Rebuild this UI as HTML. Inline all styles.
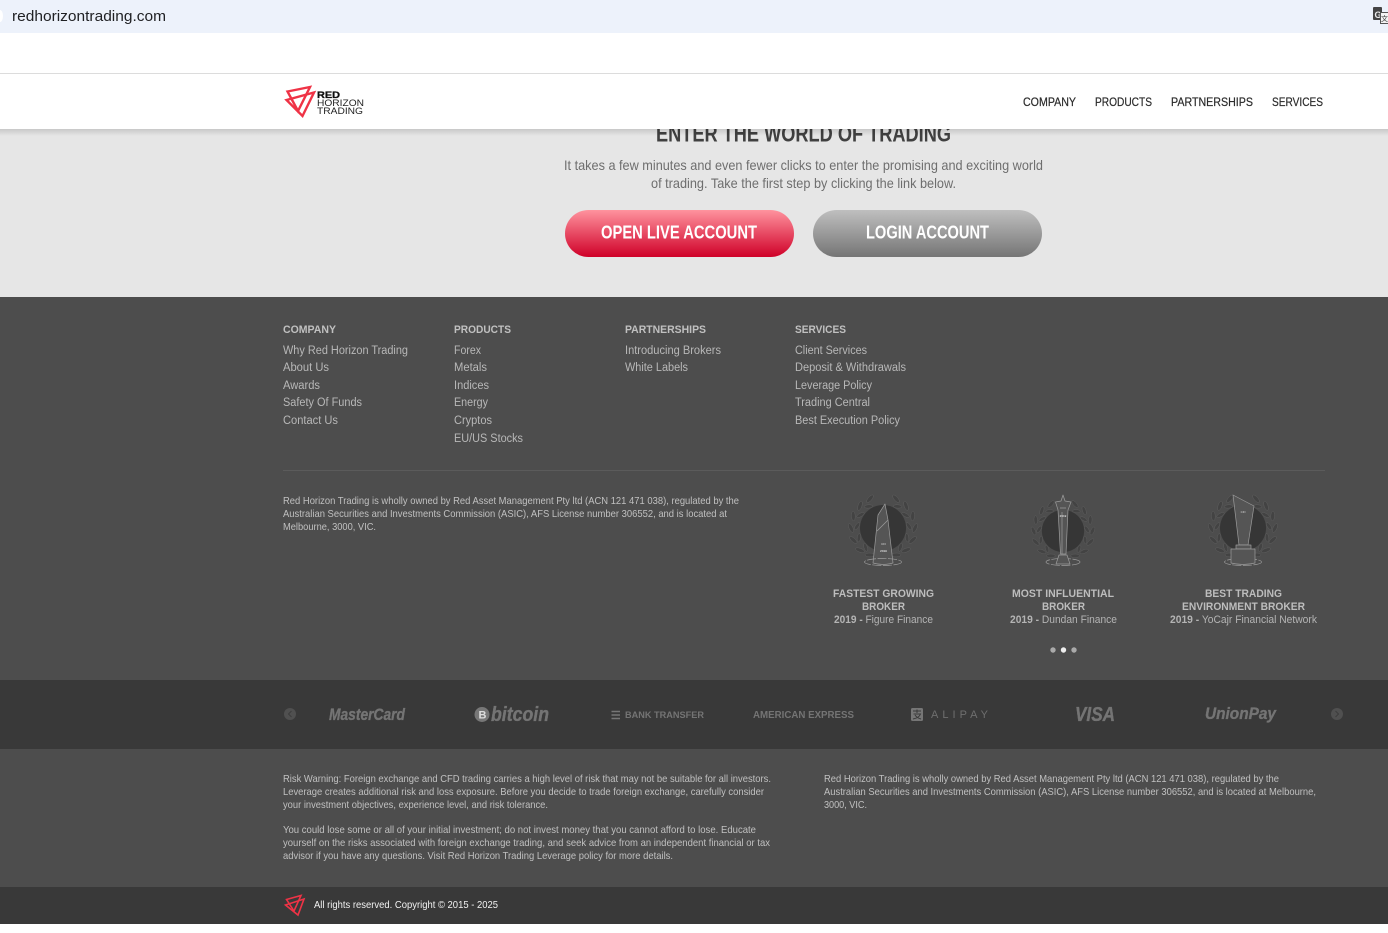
<!DOCTYPE html>
<html lang="en"><head><meta charset="utf-8"><title>Red Horizon Trading</title>
<style>
html,body{margin:0;padding:0;background:#fff;width:1388px;height:933px;overflow:hidden}
svg{position:absolute;left:0;top:0;display:block}
text{font-family:"Liberation Sans",sans-serif;white-space:pre}
.h{font-size:11px;font-weight:700;fill:#c0c0c0}
.l{font-size:11.5px;fill:#b8b8b8}
.p{font-size:10.5px;fill:#c0c0c0}
.n{font-size:11.5px;fill:#2b2b2b;stroke:#2b2b2b;stroke-width:.2}
.a{font-size:11px;font-weight:700;fill:#bdbdbd}
.b{font-size:11px;fill:#b4b4b4}
.g{fill:#747474;font-weight:700;stroke:#747474;stroke-width:.35}
.g2{fill:#747474;font-weight:700}
</style></head><body>
<svg width="1388" height="933" viewBox="0 0 1388 933" xmlns="http://www.w3.org/2000/svg">
<defs>
<linearGradient id="r" x1="0" y1="0" x2="0" y2="1"><stop offset="0" stop-color="#ff939e"/><stop offset="1" stop-color="#cf0028"/></linearGradient>
<linearGradient id="s" x1="0" y1="0" x2="0" y2="1"><stop offset="0" stop-color="#bfbfbf"/><stop offset="1" stop-color="#757575"/></linearGradient>
<linearGradient id="sh" x1="0" y1="0" x2="0" y2="1"><stop offset="0" stop-color="#000" stop-opacity=".13"/><stop offset="1" stop-color="#000" stop-opacity="0"/></linearGradient>
<g id="side" fill="#434343" stroke="#626262" stroke-width=".4">
<ellipse rx="1.9" ry="4.8" transform="rotate(-24) translate(0,-32) rotate(65)"/>
<ellipse rx="1.9" ry="4.8" transform="rotate(-46) translate(0,-32) rotate(65)"/>
<ellipse rx="1.9" ry="4.8" transform="rotate(-68) translate(0,-32) rotate(65)"/>
<ellipse rx="1.9" ry="4.8" transform="rotate(-90) translate(0,-32) rotate(65)"/>
<ellipse rx="1.9" ry="4.8" transform="rotate(-112) translate(0,-32) rotate(65)"/>
<ellipse rx="1.9" ry="4.8" transform="rotate(-134) translate(0,-32) rotate(65)"/>
<ellipse rx="1.9" ry="4.8" transform="rotate(-154) translate(0,-30) rotate(65)"/>
<ellipse rx="1.7" ry="4.2" transform="rotate(-34) translate(0,-26) rotate(-60)"/>
<ellipse rx="1.7" ry="4.2" transform="rotate(-60) translate(0,-26) rotate(-60)"/>
<ellipse rx="1.7" ry="4.2" transform="rotate(-86) translate(0,-26) rotate(-60)"/>
<ellipse rx="1.7" ry="4.2" transform="rotate(-112) translate(0,-26) rotate(-60)"/>
<ellipse rx="1.7" ry="4.2" transform="rotate(-138) translate(0,-26) rotate(-60)"/>
</g>
<g id="wreath"><use href="#side"/><use href="#side" transform="scale(-1,1)"/><circle r="23" fill="#363636"/></g>
</defs>

<!-- backgrounds -->
<rect width="1388" height="933" fill="#fff"/>
<rect width="1388" height="33" fill="#edf2fb"/>
<ellipse cx="0" cy="16" rx="3" ry="6" fill="#fff"/>
<rect y="129" width="1388" height="168" fill="#e6e6e6"/>
<rect y="297" width="1388" height="383" fill="#4d4d4d"/>
<rect y="680" width="1388" height="69" fill="#393939"/>
<rect y="749" width="1388" height="138" fill="#4d4d4d"/>
<rect y="887" width="1388" height="37" fill="#393939"/>

<!-- browser bar -->
<text x="12" y="21" font-size="15" fill="#202124" textLength="154" lengthAdjust="spacingAndGlyphs">redhorizontrading.com</text>
<rect x="1373" y="7" width="9" height="13" rx="1" fill="#444"/>
<text x="1374.5" y="18" font-size="9" font-weight="700" fill="#eee">G</text>
<rect x="1380.5" y="12.5" width="8" height="11" fill="#f4f4f4" stroke="#555"/>
<text x="1381" y="21" font-size="7" fill="#333" font-family="Noto Sans CJK SC">文</text>

<!-- hero -->
<text x="656" y="141.5" font-size="23" font-weight="700" fill="#404040" textLength="295" lengthAdjust="spacingAndGlyphs">ENTER THE WORLD OF TRADING</text>
<text x="564" y="170" font-size="14" fill="#6e6e6e" textLength="479" lengthAdjust="spacingAndGlyphs">It takes a few minutes and even fewer clicks to enter the promising and exciting world</text>
<text x="651" y="188" font-size="14" fill="#6e6e6e" textLength="305" lengthAdjust="spacingAndGlyphs">of trading. Take the first step by clicking the link below.</text>
<rect x="565" y="210" width="229" height="47" rx="23.5" fill="url(#r)"/>
<rect x="813" y="210" width="229" height="47" rx="23.5" fill="url(#s)"/>
<text x="601" y="238.5" font-size="18" font-weight="700" fill="#fff" textLength="156" lengthAdjust="spacingAndGlyphs">OPEN LIVE ACCOUNT</text>
<text x="866" y="238.5" font-size="18" font-weight="700" fill="#fff" textLength="123" lengthAdjust="spacingAndGlyphs">LOGIN ACCOUNT</text>

<!-- header -->
<rect y="129" width="1388" height="7" fill="url(#sh)"/>
<rect y="73" width="1388" height="56" fill="#fff"/>
<rect y="73" width="1388" height="1" fill="#dcdcdc"/>
<g fill="none" stroke="#ef3346" stroke-width="2.4" stroke-linejoin="miter">
<path d="M287.5 91.5L310 87L298 111Z"/>
<path d="M286.5 100L314 92.5L302.5 116Z"/>
</g>
<text x="317" y="98" font-size="9" font-weight="700" fill="#111" stroke="#111" stroke-width=".3" textLength="23" lengthAdjust="spacingAndGlyphs">RED</text>
<text x="317" y="106" font-size="9.5" fill="#222" textLength="47" lengthAdjust="spacingAndGlyphs">HORIZON</text>
<text x="317" y="114" font-size="9.5" fill="#222" textLength="46" lengthAdjust="spacingAndGlyphs">TRADING</text>
<text class="n" x="1023" y="106" textLength="53" lengthAdjust="spacingAndGlyphs">COMPANY</text>
<text class="n" x="1095" y="106" textLength="57" lengthAdjust="spacingAndGlyphs">PRODUCTS</text>
<text class="n" x="1171" y="106" textLength="82" lengthAdjust="spacingAndGlyphs">PARTNERSHIPS</text>
<text class="n" x="1272" y="106" textLength="51" lengthAdjust="spacingAndGlyphs">SERVICES</text>

<!-- footer columns -->
<text class="h" x="283" y="333" textLength="53" lengthAdjust="spacingAndGlyphs">COMPANY</text>
<text class="h" x="454" y="333" textLength="57" lengthAdjust="spacingAndGlyphs">PRODUCTS</text>
<text class="h" x="625" y="333" textLength="81" lengthAdjust="spacingAndGlyphs">PARTNERSHIPS</text>
<text class="h" x="795" y="333" textLength="51" lengthAdjust="spacingAndGlyphs">SERVICES</text>

<text class="l" x="283" y="354" textLength="125" lengthAdjust="spacingAndGlyphs">Why Red Horizon Trading</text>
<text class="l" x="283" y="371" textLength="46" lengthAdjust="spacingAndGlyphs">About Us</text>
<text class="l" x="283" y="389" textLength="37" lengthAdjust="spacingAndGlyphs">Awards</text>
<text class="l" x="283" y="406" textLength="79" lengthAdjust="spacingAndGlyphs">Safety Of Funds</text>
<text class="l" x="283" y="424" textLength="55" lengthAdjust="spacingAndGlyphs">Contact Us</text>

<text class="l" x="454" y="354" textLength="27" lengthAdjust="spacingAndGlyphs">Forex</text>
<text class="l" x="454" y="371" textLength="33" lengthAdjust="spacingAndGlyphs">Metals</text>
<text class="l" x="454" y="389" textLength="35" lengthAdjust="spacingAndGlyphs">Indices</text>
<text class="l" x="454" y="406" textLength="34" lengthAdjust="spacingAndGlyphs">Energy</text>
<text class="l" x="454" y="424" textLength="38" lengthAdjust="spacingAndGlyphs">Cryptos</text>
<text class="l" x="454" y="442" textLength="69" lengthAdjust="spacingAndGlyphs">EU/US Stocks</text>

<text class="l" x="625" y="354" textLength="96" lengthAdjust="spacingAndGlyphs">Introducing Brokers</text>
<text class="l" x="625" y="371" textLength="63" lengthAdjust="spacingAndGlyphs">White Labels</text>

<text class="l" x="795" y="354" textLength="72" lengthAdjust="spacingAndGlyphs">Client Services</text>
<text class="l" x="795" y="371" textLength="111" lengthAdjust="spacingAndGlyphs">Deposit &amp; Withdrawals</text>
<text class="l" x="795" y="389" textLength="77" lengthAdjust="spacingAndGlyphs">Leverage Policy</text>
<text class="l" x="795" y="406" textLength="75" lengthAdjust="spacingAndGlyphs">Trading Central</text>
<text class="l" x="795" y="424" textLength="105" lengthAdjust="spacingAndGlyphs">Best Execution Policy</text>

<rect x="283" y="470" width="1042" height="1" fill="#5b5b5b"/>

<text class="p" x="283" y="504" textLength="456" lengthAdjust="spacingAndGlyphs">Red Horizon Trading is wholly owned by Red Asset Management Pty ltd (ACN 121 471 038), regulated by the</text>
<text class="p" x="283" y="517" textLength="444" lengthAdjust="spacingAndGlyphs">Australian Securities and Investments Commission (ASIC), AFS License number 306552, and is located at</text>
<text class="p" x="283" y="530" textLength="93" lengthAdjust="spacingAndGlyphs">Melbourne, 3000, VIC.</text>

<!-- awards -->
<use href="#wreath" x="883" y="528"/>
<use href="#wreath" transform="translate(1063 531) scale(.92)"/>
<use href="#wreath" x="1243" y="528"/>

<g fill="#555" stroke="#9c9c9c" stroke-width=".7" stroke-linejoin="round">
<path d="M885 504L878 515L873 563Q883 566 893 563L888 520Z"/>
<path d="M877 531L888 520" fill="none"/>
<ellipse cx="883" cy="562" rx="18.5" ry="3.5" fill="none" stroke-dasharray="9 1.5"/>

<ellipse cx="1063" cy="562" rx="17" ry="3.5" fill="none" stroke-dasharray="9 1.5"/>
<path d="M1063 495L1065 501L1071 502L1068 510L1066 554H1060.5L1058 510L1055.5 502L1061 501Z"/>
<path d="M1060 508L1066 508M1062 512L1062 554" fill="none"/>
<path d="M1059 555H1067L1070 564H1056Z"/>

<ellipse cx="1243" cy="562" rx="18.5" ry="3.5" fill="none" stroke-dasharray="9 1.5"/>
<path d="M1233 495L1254 506L1248 545H1239Z"/>
<path d="M1236 545H1251V549H1236Z"/>
<path d="M1231 549H1255V563Q1243 566 1231 563Z"/>
</g>
<text x="883.5" y="545" font-size="3" fill="#ddd" text-anchor="middle">CFI</text>
<text x="883.5" y="552" font-size="3" font-weight="700" fill="#ddd" text-anchor="middle">2019</text>
<text x="1063" y="517" font-size="3" font-weight="700" fill="#ddd" text-anchor="middle">2019</text>
<text x="1243" y="513" font-size="3" fill="#ddd" text-anchor="middle">CFI</text>

<text class="a" x="833" y="597" textLength="101" lengthAdjust="spacingAndGlyphs">FASTEST GROWING</text>
<text class="a" x="862" y="610" textLength="43" lengthAdjust="spacingAndGlyphs">BROKER</text>
<text class="b" x="834" y="623" textLength="99" lengthAdjust="spacingAndGlyphs"><tspan font-weight="700">2019 -</tspan> Figure Finance</text>

<text class="a" x="1012" y="597" textLength="102" lengthAdjust="spacingAndGlyphs">MOST INFLUENTIAL</text>
<text class="a" x="1042" y="610" textLength="43" lengthAdjust="spacingAndGlyphs">BROKER</text>
<text class="b" x="1010" y="623" textLength="107" lengthAdjust="spacingAndGlyphs"><tspan font-weight="700">2019 -</tspan> Dundan Finance</text>

<text class="a" x="1205" y="597" textLength="77" lengthAdjust="spacingAndGlyphs">BEST TRADING</text>
<text class="a" x="1182" y="610" textLength="123" lengthAdjust="spacingAndGlyphs">ENVIRONMENT BROKER</text>
<text class="b" x="1170" y="623" textLength="147" lengthAdjust="spacingAndGlyphs"><tspan font-weight="700">2019 -</tspan> YoCajr Financial Network</text>

<circle cx="1053" cy="650" r="2.7" fill="#aaa"/>
<circle cx="1063.5" cy="650" r="2.7" fill="#eee"/>
<circle cx="1074" cy="650" r="2.7" fill="#aaa"/>

<!-- payments -->
<circle cx="290" cy="714" r="6" fill="#505050"/>
<path d="M291.5 711L288.5 714L291.5 717" fill="none" stroke="#3d3d3d" stroke-width="1"/>
<circle cx="1337" cy="714" r="6" fill="#505050"/>
<path d="M1335.5 711L1338.5 714L1335.5 717" fill="none" stroke="#3d3d3d" stroke-width="1"/>

<text class="g" x="329" y="720" font-size="17" font-style="italic" textLength="76" lengthAdjust="spacingAndGlyphs">MasterCard</text>
<circle cx="482" cy="714.5" r="7.5" fill="#777"/>
<text x="478.5" y="718.5" font-size="11" font-weight="700" fill="#ddd">B</text>
<text class="g" x="491" y="721" font-size="20" font-style="italic" textLength="58" lengthAdjust="spacingAndGlyphs">bitcoin</text>
<path d="M611.5 711.5H620M611.5 715H620M611.5 718.5H620" stroke="#767676" stroke-width="1.4"/>
<text class="g2" x="625" y="718" font-size="9.5" textLength="79" lengthAdjust="spacingAndGlyphs">BANK TRANSFER</text>
<text class="g2" x="753" y="718" font-size="10" textLength="101" lengthAdjust="spacingAndGlyphs">AMERICAN EXPRESS</text>
<rect x="911" y="708" width="12" height="13" rx="1.5" fill="#767676"/>
<path d="M913 711H921M917 709.5V713M913.5 714H920.5Q919 718 913 719M915 715Q917 718 921 719" fill="none" stroke="#393939" stroke-width="1"/>
<text x="931" y="718" font-size="11" fill="#6f6f6f" textLength="57" lengthAdjust="spacing">ALIPAY</text>
<text class="g" x="1075" y="721" font-size="20" font-style="italic" textLength="40" lengthAdjust="spacingAndGlyphs">VISA</text>
<text class="g" x="1205" y="719" font-size="17" font-style="italic" textLength="71" lengthAdjust="spacingAndGlyphs">UnionPay</text>

<!-- bottom text -->
<text class="p" x="283" y="782" textLength="488" lengthAdjust="spacingAndGlyphs">Risk Warning: Foreign exchange and CFD trading carries a high level of risk that may not be suitable for all investors.</text>
<text class="p" x="283" y="795" textLength="481" lengthAdjust="spacingAndGlyphs">Leverage creates additional risk and loss exposure. Before you decide to trade foreign exchange, carefully consider</text>
<text class="p" x="283" y="808" textLength="265" lengthAdjust="spacingAndGlyphs">your investment objectives, experience level, and risk tolerance.</text>
<text class="p" x="283" y="833" textLength="473" lengthAdjust="spacingAndGlyphs">You could lose some or all of your initial investment; do not invest money that you cannot afford to lose. Educate</text>
<text class="p" x="283" y="846" textLength="487" lengthAdjust="spacingAndGlyphs">yourself on the risks associated with foreign exchange trading, and seek advice from an independent financial or tax</text>
<text class="p" x="283" y="859" textLength="390" lengthAdjust="spacingAndGlyphs">advisor if you have any questions. Visit Red Horizon Trading Leverage policy for more details.</text>

<text class="p" x="824" y="782" textLength="455" lengthAdjust="spacingAndGlyphs">Red Horizon Trading is wholly owned by Red Asset Management Pty ltd (ACN 121 471 038), regulated by the</text>
<text class="p" x="824" y="795" textLength="492" lengthAdjust="spacingAndGlyphs">Australian Securities and Investments Commission (ASIC), AFS License number 306552, and is located at Melbourne,</text>
<text class="p" x="824" y="808" textLength="43" lengthAdjust="spacingAndGlyphs">3000, VIC.</text>

<!-- copyright -->
<g fill="none" stroke="#ef3346" stroke-width="1.6">
<path d="M286.5 899.5L301 895.5L294 911Z"/>
<path d="M285.5 905L304 899L298 915Z"/>
</g>
<text x="314" y="908" font-size="10.5" fill="#f2f2f2" textLength="184" lengthAdjust="spacingAndGlyphs">All rights reserved. Copyright © 2015 - 2025</text>
</svg>
</body></html>
